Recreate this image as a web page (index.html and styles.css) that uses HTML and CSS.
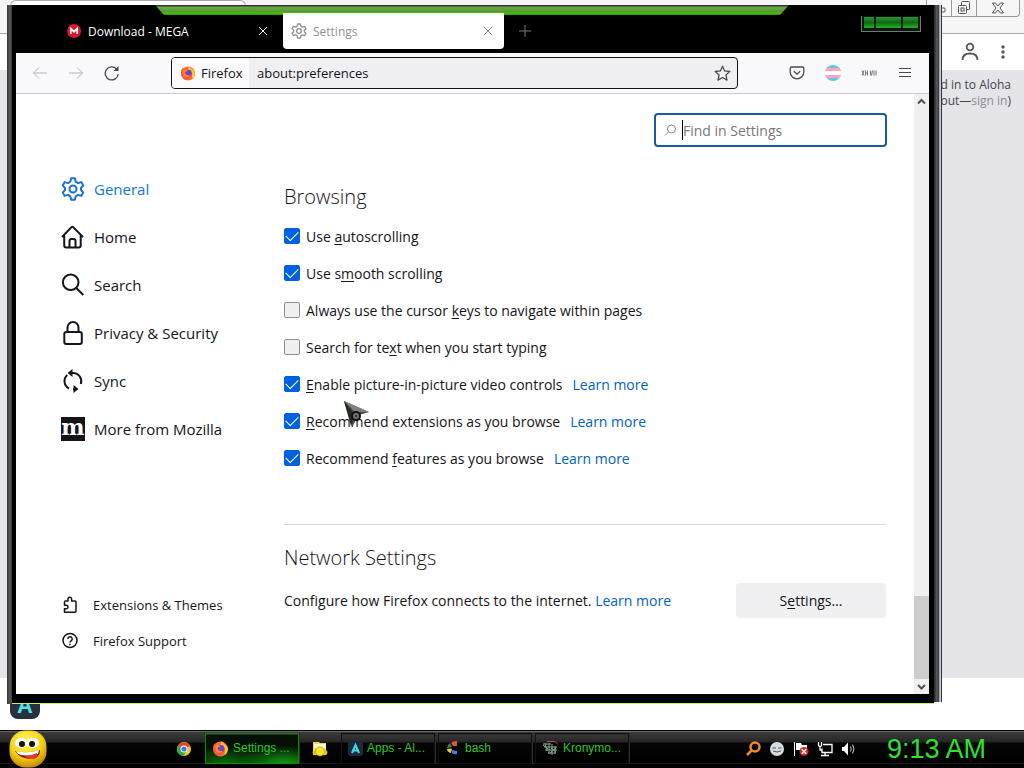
FILE: index.html
```html
<!DOCTYPE html>
<html lang="en">
<head>
<meta charset="utf-8">
<title>Settings</title>
<link rel="stylesheet" href="styles.css">
</head>
<body>
<div class="desktop">
  <div class="workspace">
    <section class="back">
      <div class="back-title">
        <div class="back-tab"></div>
        <div class="back-controls">
          <button aria-label="Minimize"><svg width="14" height="14" viewBox="0 0 14 14"><rect x="2" y="7" width="11" height="4" rx="1"/></svg></button>
          <button aria-label="Restore"><svg width="16" height="14" viewBox="0 0 16 14"><rect x="5.500" y=".5" width="8" height="8" rx="1"/><rect x="2.500" y="4.500" width="8" height="8" rx="1" fill="#f5f5f5"/><rect x="5" y="7" width="3" height="3"/></svg></button>
          <button class="wide" aria-label="Close"><svg width="14" height="14" viewBox="0 0 14 14"><path d="M1.500 2h3L7 5l2.500-3h3L9 7l3.500 5h-3L7 9l-2.500 3h-3L5 7z"/></svg></button>
        </div>
      </div>
      <div class="back-tools">
        <svg width="20" height="20" viewBox="0 0 20 20" fill="none" stroke="#56575b" stroke-width="1.800"><circle cx="10" cy="5" r="3.300"/><path d="M2.500 18c0-4.500 3-6.500 7.500-6.500s7.500 2 7.500 6.500"/></svg>
        <svg width="6" height="20" viewBox="0 0 6 20" fill="#56575b"><circle cx="3" cy="5" r="1.700"/><circle cx="3" cy="10" r="1.700"/><circle cx="3" cy="15" r="1.700"/></svg>
      </div>
      <div class="back-page"><p>d in to Aloha<br>out—<a href="#">sign in</a>)</p></div>
      <div class="back-foot"><span class="aloha">A</span></div>
    </section>

    <section class="window">
      <div class="rim"></div>
      <div class="body">
        <div class="glow"></div>
        <div class="leds"><i></i><i class="long"></i><i></i></div>
        <div class="tabs">
          <div class="tab dark">
            <svg width="14" height="14" viewBox="0 0 14 14"><circle cx="7" cy="7" r="7" fill="#e0142c"/><path d="M3.800 10V4.600L7 7.700l3.200-3.100V10" fill="none" stroke="#fff" stroke-width="1.700"/></svg>
            <span>Download - MEGA</span>
            <button aria-label="Close tab"><svg width="10" height="10" viewBox="0 0 10 10"><path d="M1 1l8 8M9 1l-8 8"/></svg></button>
          </div>
          <div class="tab light">
            <svg class="gear" width="16" height="16" viewBox="0 0 24 24"><path d="M10 1.500h4l.8 3.300 2.300 1.300 3.300-1 2 3.500L20 11v2l2.400 2.400-2 3.500-3.300-1-2.300 1.300-.8 3.300h-4l-.8-3.300-2.300-1.300-3.300 1-2-3.500L4 13v-2L1.600 8.600l2-3.500 3.300 1 2.300-1.300z"/><circle cx="12" cy="12" r="3.500"/></svg>
            <span>Settings</span>
            <button aria-label="Close tab"><svg width="10" height="10" viewBox="0 0 10 10"><path d="M1 1l8 8M9 1l-8 8"/></svg></button>
          </div>
          <button class="newtab" aria-label="New tab"><svg width="12" height="12" viewBox="0 0 12 12"><path d="M6 0v12M0 6h12"/></svg></button>
        </div>

        <div class="nav">
          <div class="nav-left">
            <button aria-label="Back"><svg width="16" height="16" viewBox="0 0 16 16" stroke="#b5b5b8"><path d="M15 8H1.500M7 2.500L1.500 8 7 13.500"/></svg></button>
            <button aria-label="Forward"><svg width="16" height="16" viewBox="0 0 16 16" stroke="#b5b5b8"><path d="M1 8h13.500M9 2.500L14.500 8 9 13.500"/></svg></button>
            <button aria-label="Reload"><svg width="16" height="16" viewBox="0 0 16 16" stroke="#4a4a50" stroke-width="1.300"><path d="M14.200 9A6.500 6.500 0 1 1 12.500 4l1.300 1.500"/><path d="M14.500 1v5h-5z" fill="#4a4a50" stroke="none"/></svg></button>
          </div>
          <div class="url">
            <div class="identity">
              <svg width="16" height="16" viewBox="0 0 16 16"><use href="#fox"/></svg>
              <span>Firefox</span>
            </div>
            <input class="address" type="text" value="about:preferences" aria-label="Address">
            <button aria-label="Bookmark"><svg width="17" height="17" viewBox="0 0 17 17" stroke="#4a4a50" stroke-width="1.300" stroke-linejoin="round"><path d="M8.500 1.200l2.100 4.700 5.200.6-3.900 3.400 1.100 5.200-4.500-2.600L4 15.100l1.100-5.200L1.200 6.500l5.200-.6z"/></svg></button>
          </div>
          <div class="nav-right">
            <button aria-label="Pocket"><svg width="16" height="16" viewBox="0 0 16 16" stroke="#4a4a50" stroke-width="1.300"><path d="M2.500 2h11q1.300 0 1.300 1.300V7a6.800 6.800 0 0 1-13.600 0V3.300Q1.200 2 2.500 2zM4.800 6.200L8 9.200l3.200-3"/></svg></button>
            <button aria-label="Extension"><svg width="16" height="16" viewBox="0 0 16 16"><clipPath id="disc"><circle cx="8" cy="8" r="8"/></clipPath><g clip-path="url(#disc)"><path fill="#5fc4e6" d="M0 0h16v16H0z"/><path fill="#f3a8bb" d="M0 3h16v10H0z"/><path fill="#fff" d="M0 6h16v4H0z"/></g></svg></button>
            <button aria-label="Add-on"><svg width="16" height="8" viewBox="0 0 16 8" stroke="#77777b"><path d="M1 1.500l2 5M3 1.500l-2 5M4.500 1.500v5M6.500 1.500v5M9.500 1.500v5M11.500 1.500l-1 5M13 1.500v5M15 1.500v5M4.500 4h2"/></svg></button>
            <button aria-label="Menu"><svg width="14" height="12" viewBox="0 0 14 12" stroke="#4a4a50"><path d="M1 1.500h12M1 5.500h12M1 9.500h12"/></svg></button>
          </div>
        </div>

        <div class="page">
          <aside class="side">
            <nav class="cats">
              <a href="#" class="active"><svg width="24" height="24" viewBox="0 0 24 24"><path d="M10.200 1.200h3.600l.9 3.500 2.300 1.400 3.300-1 2 3.300L20 11v2l2.300 2.600-2 3.300-3.300-1-2.300 1.400-.9 3.500h-3.600l-.9-3.500L7 17.900l-3.300 1-2-3.300L4 13v-2L1.700 8.400l2-3.300 3.300 1 2.300-1.400z"/><circle cx="12" cy="12" r="3.500"/></svg>General</a>
              <a href="#"><svg width="24" height="24" viewBox="0 0 24 24"><path d="M1 12L10.500 2.100q.8-.8 1.600 0L22 12M3.200 10v10.500q0 2 2 2h12.500q2 0 2-2V10M8.500 22v-6q0-2 2-2h2q2 0 2 2v6"/></svg>Home</a>
              <a href="#"><svg width="24" height="24" viewBox="0 0 24 24"><circle cx="9.700" cy="9.200" r="7.800"/><path d="M15.300 15l7 7"/></svg>Search</a>
              <a href="#"><svg width="24" height="24" viewBox="0 0 24 24"><rect x="3.300" y="11" width="17.500" height="12" rx="2"/><path d="M6.500 11V6.500a5.500 5.500 0 0 1 11 0V11"/></svg>Privacy &amp; Security</a>
              <a href="#"><svg width="24" height="24" viewBox="0 0 24 24"><path d="M8 19.500A8.200 8.200 0 0 1 6.300 6M10 4h2a8.200 8.200 0 0 1 7.800 11M12 20.300h2"/><path d="M11.500 0v8L6.500 4zM12.500 16v8l5-4z" fill="#15141a" stroke="none"/></svg>Sync</a>
              <a href="#"><span class="moz">m</span>More from Mozilla</a>
            </nav>
            <nav class="extra">
              <a href="#"><svg width="18" height="18" viewBox="0 0 18 18"><path d="M3.500 16.200V12.700h1.700a1.700 1.700 0 0 0 0-3.500H3.500V6q0-1 1-1H7V3a1.800 1.800 0 0 1 3.600 0v2H14q1 0 1 1v9.200q0 1-1 1z"/></svg>Extensions &amp; Themes</a>
              <a href="#"><svg width="18" height="18" viewBox="0 0 18 18"><circle cx="9" cy="8.500" r="7"/><path d="M6.800 7a2.200 2.200 0 1 1 3.200 2q-1 .5-1 1.500M9 11.700v1.500"/></svg>Firefox Support</a>
            </nav>
          </aside>

          <main class="main">
            <label class="find">
              <svg width="13" height="13" viewBox="0 0 13 13" fill="none" stroke="#888"><circle cx="7.500" cy="5" r="4"/><path d="M4.700 7.800L1 11.500"/></svg>
              <i class="caret"></i>
              <input type="text" placeholder="Find in Settings" aria-label="Find in Settings">
            </label>

            <h2>Browsing</h2>
            <div class="row"><label><input type="checkbox" checked><span>Use <u>a</u>utoscrolling</span></label></div>
            <div class="row"><label><input type="checkbox" checked><span>Use s<u>m</u>ooth scrolling</span></label></div>
            <div class="row"><label><input type="checkbox"><span>Always use the cursor <u>k</u>eys to navigate within pages</span></label></div>
            <div class="row"><label><input type="checkbox"><span>Search for te<u>x</u>t when you start typing</span></label></div>
            <div class="row"><label><input type="checkbox" checked><span><u>E</u>nable picture-in-picture video controls</span></label><a href="#">Learn more</a></div>
            <div class="row"><label><input type="checkbox" checked><span><u>R</u>ecommend extensions as you browse</span></label><a href="#">Learn more</a></div>
            <div class="row"><label><input type="checkbox" checked><span>Recommend <u>f</u>eatures as you browse</span></label><a href="#">Learn more</a></div>

            <hr>
            <h2>Network Settings</h2>
            <div class="network">
              <p>Configure how Firefox connects to the internet. <a href="#">Learn more</a></p>
              <button><span>S<u>e</u>ttings…</span></button>
            </div>
          </main>

          <div class="scroll">
            <svg width="15" height="15" viewBox="0 0 15 15"><path d="M4 9.500L7.500 6 11 9.500"/></svg>
            <div class="track"><div class="thumb"></div></div>
            <svg width="15" height="15" viewBox="0 0 15 15"><path d="M4 6l3.500 3.500L11 6"/></svg>
          </div>
        </div>
      </div>
      <div class="rim right"></div>
    </section>

    <svg class="pointer" width="30" height="30" viewBox="0 0 30 30"><path d="M1 1l25 11-10 3-7 12z" fill="#464a46"/><path d="M1 1l25 11H12z" fill="#7c827c"/><path d="M1 1l7 25 3-12z" fill="#252a25"/><circle cx="13" cy="16" r="4" fill="#777" stroke="#111" stroke-width="2"/><circle cx="13" cy="16" r="1" fill="#111"/></svg>
  </div>

  <footer class="taskbar">
    <button class="start" aria-label="Start"><svg width="38" height="38" viewBox="0 0 38 38"><defs><radialGradient id="face" cx=".45" cy=".3" r=".7"><stop offset="0" stop-color="#fff66a"/><stop offset=".6" stop-color="#f7d414"/><stop offset="1" stop-color="#c98a00"/></radialGradient></defs><rect x=".5" y=".5" width="37" height="37" rx="16" fill="url(#face)"/><ellipse cx="12" cy="13" rx="6" ry="5" fill="#fff"/><ellipse cx="24" cy="13" rx="6" ry="5" fill="#fff"/><circle cx="13" cy="14" r="3" fill="#1a1208"/><circle cx="23" cy="14" r="3" fill="#1a1208"/><path d="M6 21q13 3 25-1 0 8-8 9-12 0-17-8z" fill="#6d2208"/><path d="M7 21q12 3 23-1l-1 4q-11 3-20 0z" fill="#fff"/><path d="M15 26q7 0 13-3 1 6-5 6-5 0-8-3z" fill="#e53a2d"/></svg></button>
    <button class="pin chrome" aria-label="Chrome"><svg width="16" height="16" viewBox="0 0 16 16"><circle cx="8" cy="8" r="7" fill="#f7c52b"/><path d="M8 8L2 4.500A7 7 0 0 1 14.200 5z" fill="#e8432f"/><path d="M8 8L2 4.400A7 7 0 0 0 7.500 15l3-5z" fill="#2da94f"/><circle cx="8" cy="8" r="3.500" fill="#fff"/><circle cx="8" cy="8" r="2.600" fill="#3f7de8"/></svg></button>
    <button class="task on"><svg width="17" height="17" viewBox="0 0 16 16"><g id="fox"><circle cx="8" cy="8.500" r="7" fill="#ff6a35"/><path d="M9 1q1 2 3 3 3 2 3 5a7 7 0 0 1-3 5q1-7-4-9z" fill="#ffc72e"/><path d="M1 8q0-4 2-5l1 2 3 0q3 0 5 3-1 6-6 7-4-1-5-7z" fill="#fb583c"/><circle cx="8.500" cy="8" r="3.300" fill="#7340c8"/><path d="M3 5q3-1 5 1-3 0-3 2 1 3 5 2-2 4-6 1z" fill="#ff8b2c"/></g></svg><span>Settings ...</span></button>
    <button class="pin folder" aria-label="Files"><svg width="16" height="16" viewBox="0 0 16 16"><path d="M1 1h6l1 1h6v12H1z" fill="#e9d77a"/><path d="M2 3h12v4H2z" fill="#fff8c8"/><circle cx="3.500" cy="11.500" r="2.800" fill="#f2c913"/><circle cx="12.500" cy="11.500" r="2.800" fill="#f2c913"/><circle cx="8" cy="10.500" r="4.500" fill="#f8e622" stroke="#a88a10" stroke-width=".6"/></svg></button>
    <button class="task"><svg width="15" height="15" viewBox="0 0 15 15"><rect width="15" height="15" rx="3" fill="#1c2a3c"/><path d="M4 12l3.500-8L11 12M5.500 9.500h4" fill="none" stroke="#43dce0" stroke-width="2"/></svg><span>Apps - Al...</span></button>
    <button class="task"><svg width="16" height="16" viewBox="0 0 16 16"><path d="M6 3q2-2.500 6-2v5H8z" fill="#e4523e"/><path d="M5 3l2 4-5 1q0-3 3-5z" fill="#3a8a50"/><path d="M2 9l5-.5L6 13q-4-1-4-4z" fill="#f3c643"/><path d="M7 10l5 1v3q-3 1-5-1z" fill="#4a7de0"/></svg><span>bash</span></button>
    <button class="task"><svg width="17" height="16" viewBox="0 0 17 16" fill="none" stroke="#86a98c"><path d="M1 4h8M2 7h13M3 10h12M6 13h8M3 3l2 8M7 3v11M10 4v11M13 6v8M1 5l5 4M9 8l5 4M14 8l-6 5"/><path d="M5 1.500h8l3 3" stroke="#b04a78"/></svg><span>Kronymo...</span></button>
    <div class="tray">
      <svg width="16" height="16" viewBox="0 0 16 16" fill="none" stroke="#f08a1c" stroke-width="2.500"><circle cx="10" cy="6" r="4.500"/><path d="M7 9l-5 5"/></svg>
      <svg width="16" height="16" viewBox="0 0 16 16"><circle cx="8" cy="8" r="7" fill="#d5dde0"/><path d="M3.500 7h3.500M9 7h3.500M4 10q4 2 8 0" fill="none" stroke="#555"/></svg>
      <svg width="16" height="16" viewBox="0 0 16 16"><path d="M1.500 1v14" stroke="#fff"/><path d="M3 2h5l1 2h5v5H3z" fill="#fff"/><circle cx="11" cy="10.500" r="4.500" fill="#d32626"/><path d="M8.800 8.300l4.400 4.400M13.200 8.300l-4.400 4.400" stroke="#fff" stroke-width="1.500"/></svg>
      <svg width="16" height="16" viewBox="0 0 16 16" fill="none" stroke="#fff" stroke-width="1.300"><path d="M6 3.500h9v8H5v-4M4 14.500h8M8 12v2M1.500 1v3q0 1.500 1.500 1.500T4.500 4V1M3 6v3h2"/></svg>
      <svg width="16" height="16" viewBox="0 0 16 16"><path d="M1 6h2l4-4.500v13L3 10H1z" fill="#fff"/><path d="M9.500 5.500q1.500 2.500 0 5M11.500 3.500q3 4.500 0 9" fill="none" stroke="#ccc"/></svg>
    </div>
    <time class="clock">9:13 AM</time>
  </footer>
</div>
</body>
</html>
```
FILE: styles.css
```css
* { box-sizing: border-box; }
html, body { height: 100%; margin: 0; }
body { font-family: "Open Sans", "Noto Sans", sans-serif; font-size: 14px; color: #15141a; overflow: hidden; }
button { border: 0; padding: 0; margin: 0; background: none; font: inherit; color: inherit; display: flex; align-items: center; justify-content: center; }
input { font: inherit; color: inherit; }
h2, p { margin: 0; }
a { text-decoration: none; color: #0061c0; }
svg { flex: none; }
u { text-underline-offset: 2px; text-decoration-thickness: 1px; }

.desktop { display: flex; flex-direction: column; height: 100vh; }
.workspace { position: relative; flex: 1; display: flex; min-height: 0; }

/* window behind */
.back { flex: 1; display: flex; flex-direction: column; background: #fff; }
.back-title { display: flex; justify-content: space-between; align-items: flex-start; height: 34px; padding: 0 4px 0 10px; background: #f6f6f6; border-bottom: 1px solid #aaa; }
.back-tab { width: 236px; height: 33px; background: #fff; border: 1px solid #aaa; border-bottom: 0; border-radius: 6px 6px 0 0; }
.back-controls { display: flex; height: 17px; border: 1px solid #999; border-top: 0; border-radius: 0 0 4px 4px; }
.back-controls button { width: 25px; border-right: 1px solid #999; }
.back-controls .wide { width: 42px; border-right: 0; }
.back-controls svg { fill: none; stroke: #555; }
.back-tools { display: flex; justify-content: flex-end; align-items: center; gap: 20px; height: 36px; padding-right: 18px; }
.back-page { flex: 1; padding: 7px 13px; background: #e4e4e9; text-align: right; font-size: 12px; line-height: 16px; color: #45464a; }
.back-page a { color: #8c8d94; }
.back-foot { height: 52px; padding: 11px 10px; }
.aloha { display: flex; align-items: flex-end; justify-content: center; width: 30px; height: 30px; border-radius: 8px; background: #28323e; color: #4fe3e6; font: bold 22px "Liberation Sans", sans-serif; }

/* settings window */
.window { position: absolute; top: 5px; right: 82px; bottom: 26px; left: 7px; display: flex; }
.rim { width: 5px; background: linear-gradient(90deg, #333, #5c5c5c 60%, #333); }
.rim.right { width: 8px; margin-bottom: 2px; background: linear-gradient(90deg, #222 0, #5a5c60 3px, #333 5px, #8c95a8 5px, #dde 7px, #333 7px); }
.body { position: relative; flex: 1; min-width: 0; display: flex; flex-direction: column; padding: 8px 5px 9px 4px; background: #000; border-bottom: 1px solid #c8ee50; }
.glow { position: absolute; top: 0; left: 143px; right: 145px; height: 10px; background: linear-gradient(#333 0 1px, #70a848 2px, #4f9a28 7px, #41cf0a 8px, #2a8a08); clip-path: polygon(0 0, 100% 0, calc(100% - 9px) 100%, 9px 100%); }
.leds { position: absolute; top: 11px; right: 13px; display: flex; gap: 2px; padding: 1px 2px 3px; background: #0a1a0a; border: 1px solid #777; border-top: 0; }
.leds i { width: 10px; height: 11px; background: linear-gradient(#31903c, #0d6a12 50%, #25b025); }
.leds .long { width: 25px; }
.leds i:last-child { width: 15px; }

.tabs { display: flex; height: 40px; padding-bottom: 4px; font-size: 12px; z-index: 1; }
.tab { display: flex; align-items: center; gap: 7px; }
.tab span { flex: 1; }
.tab svg { fill: none; }
.tab button { width: 16px; height: 16px; }
.tab.dark { width: 267px; padding: 0 12px 0 51px; color: #fff; }
.tab.dark button svg { stroke: #fff; }
.tab.light { width: 221px; padding: 0 8px; gap: 6px; border-radius: 0 0 4px 4px; background: #fff; color: #909094; }
.tab.light svg { stroke: #909094; }
.tab .gear { stroke-width: 2; stroke-linejoin: round; }
.newtab { width: 42px; }
.newtab svg { stroke: #777; }

.nav { display: flex; align-items: center; height: 41px; background: #f9f9fb; border-bottom: 1px solid #ccccd0; }
.nav-left { display: flex; width: 155px; padding: 0 0 0 16px; gap: 20px; }
.nav svg { fill: none; }
.url { flex: 1; display: flex; height: 32px; border: 1px solid #111; border-radius: 4px; background: #f0f0f4; overflow: hidden; }
.identity { display: flex; align-items: center; gap: 5px; width: 77px; padding-left: 8px; background: #fafafc; font-size: 13px; }
.address { flex: 1; min-width: 0; border: 0; padding: 0 8px; background: none; font-size: 13px; outline: 0; }
.url button { width: 30px; }
.nav-right { display: flex; width: 191px; padding-left: 51px; gap: 20px; }
.nav-right button { width: 16px; height: 16px; }

.page { flex: 1; min-height: 0; display: flex; background: #fff; }
.side { flex: none; width: 268px; display: flex; flex-direction: column; justify-content: space-between; padding: 71px 0 35px 45px; }
.side a { display: flex; align-items: center; color: #15141a; }
.side svg { fill: none; stroke: #15141a; stroke-width: 2; stroke-linejoin: round; }
.cats a { height: 48px; gap: 9px; font-size: 15px; }
.cats .active { color: #0d78dc; }
.cats .active svg { stroke: #1a6fdc; }
.extra a { height: 36px; gap: 14px; font-size: 13px; }
.extra svg { stroke-width: 1.5; }
.moz { width: 24px; height: 24px; background: #15141a; color: #fff; font: bold 22px/20px "DejaVu Serif", serif; text-align: center; }

.main { flex: 1; min-width: 0; padding: 19px 0 0; }
.find { display: flex; align-items: center; width: 233px; height: 34px; margin: 0 -1px 35px auto; padding-left: 8px; border: 2px solid #175a9e; border-radius: 4px; background: #fff; }
.find input { flex: 1; min-width: 0; padding: 0; border: 0; outline: 0; background: none; }
.find input::placeholder { color: #77777c; opacity: 1; }
.caret { width: 1px; height: 20px; margin-left: 5px; background: #000; }
h2 { font-size: 20px; font-weight: 300; line-height: 30px; color: #15141a; }
.row { display: flex; align-items: center; gap: 10px; height: 37px; }
h2 + .row { margin-top: 6px; }
.row label { display: flex; align-items: center; gap: 6px; }
.row input { appearance: none; width: 16px; height: 16px; margin: 0 0 2px; border: 1px solid #8f8f9d; border-radius: 2px; background: #f0f0f0; display: grid; place-items: center; }
.row input:checked { border-color: #0061e0; background: #0061e0; }
.row input:checked::after { content: ""; width: 11px; height: 6px; margin-bottom: 3px; border: solid #fff; border-width: 0 0 1px 1px; transform: rotate(-45deg); }
hr { margin: 47px 0 18px; border: 0; border-top: 1px solid #d7d7db; }
.network { display: flex; justify-content: space-between; align-items: center; margin-top: 10px; }
.network button { width: 150px; height: 35px; border-radius: 4px; background: #f0f0f2; }

.scroll { flex: none; display: flex; flex-direction: column; width: 15px; margin-left: 28px; background: #f0f0f0; }
.scroll svg { fill: none; stroke: #505050; stroke-width: 2; }
.track { flex: 1; display: flex; flex-direction: column; justify-content: flex-end; }
.thumb { height: 14.5%; background: #cdcdcd; }
.pointer { position: absolute; left: 343px; top: 400px; }

/* taskbar */
.taskbar { display: flex; align-items: center; height: 38px; background: linear-gradient(#000 0 1px, #666 1px 2px, #3c3c3c 2px, #262626 12px, #050505 13px, #000 33px, #1c1c1c 33px 34px, #000 34px); font: 12px "Liberation Sans", sans-serif; }
.start { width: 38px; margin-left: 9px; }
.chrome { margin-left: 129px; }
.pin { width: 16px; }
.task { width: 94px; height: 31px; margin: 0 0 2px 3px; padding: 0 6px; gap: 4px; justify-content: flex-start; border: 1px solid #111; box-shadow: 1px 0 #2c2c2c, inset 0 1px #2a2a2a; color: #2fc42f; white-space: nowrap; }
.task.on { margin-left: 13px; border-color: #0b8a0b; background: radial-gradient(ellipse at 20% 110%, #0a7a0a, transparent 45%), radial-gradient(ellipse at 85% 110%, #13b013, transparent 45%), #031003; }
.folder { margin-left: 13px; }
.folder + .task { margin-left: 13px; }
.tray { display: flex; gap: 8px; margin-left: auto; }
.clock { margin: 0 38px 0 30px; font-size: 27px; color: #2fe02f; }
```
